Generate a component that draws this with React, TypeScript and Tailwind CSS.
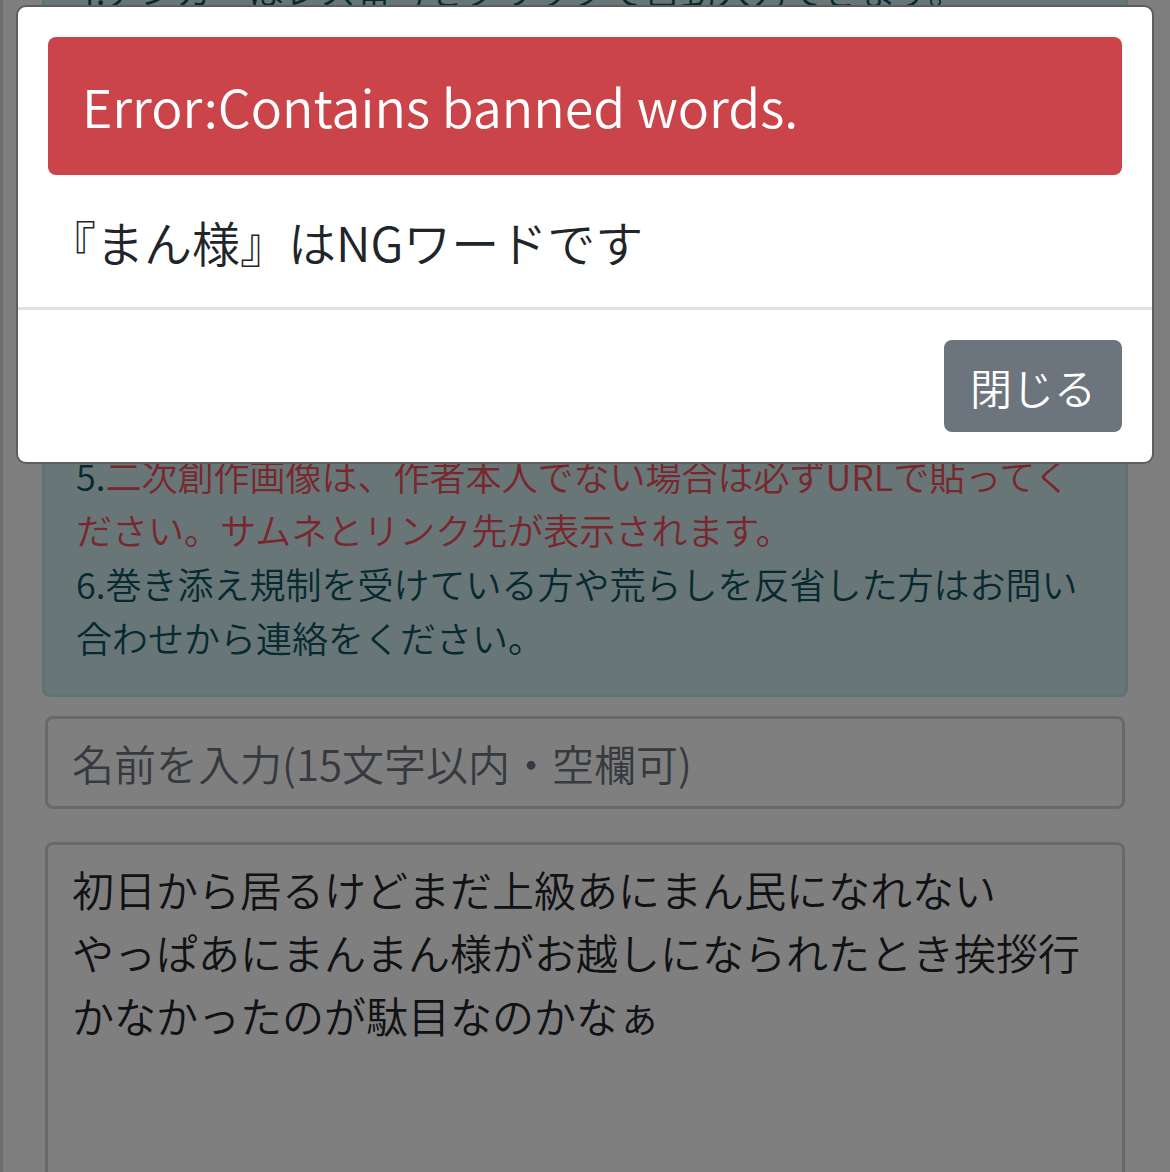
const hiddenRules = [
  "4.アンカーはレス番号をクリックで自動入力できます。",
  "※レス番号を長押しすると返信一覧が表示されます。",
  "※画像はタップで拡大表示できます。",
  "※書き込みには一定の間隔が必要です。",
  "※連続投稿は規制の対象になります。",
  "※NGワードを含む書き込みはできません。",
  "伏せ字による回避も禁止です。",
  "※誹謗中傷や個人情報の書き込みは禁止です。",
  "荒らしには反応せず、通報してください。",
];

function NoticeBox() {
  return (
    <div className="rounded-[8px] border-[3px] border-[#bee5eb] bg-[#d1ecf1] px-[31px] py-[30px] text-[36px] leading-[54px] text-[#0c5460]">
      {hiddenRules.map((line, i) => (
        <div key={i} className="h-[54px] whitespace-nowrap">
          {line}
        </div>
      ))}
      <div className="whitespace-nowrap">
        5.
        <span className="text-[#f0505a]">二次創作画像は、作者本人でない場合は必ずURLで貼ってく</span>
      </div>
      <div className="whitespace-nowrap text-[#f0505a]">ださい。サムネとリンク先が表示されます。</div>
      <div className="whitespace-nowrap">6.巻き添え規制を受けている方や荒らしを反省した方はお問い</div>
      <div className="whitespace-nowrap">合わせから連絡をください。</div>
    </div>
  );
}

function PostForm() {
  return (
    <form className="mx-[3px] mt-[19px] flex flex-col gap-[33px]">
      <input
        type="text"
        placeholder="名前を入力(15文字以内・空欄可)"
        className="h-[93px] w-full rounded-[8px] border-[3px] border-[#ced4da] bg-white px-[24px] text-[42px] leading-[63px] text-[#495057] outline-none placeholder:text-[#6c757d]"
      />
      <textarea
        defaultValue={"初日から居るけどまだ上級あにまん民になれない\nやっぱあにまんまん様がお越しになられたとき挨拶行かなかったのが駄目なのかなぁ"}
        className="h-[420px] w-full resize-none rounded-[8px] border-[3px] border-[#ced4da] bg-white px-[24px] py-[12px] text-[42px] leading-[63px] text-[#212529] outline-none"
      />
    </form>
  );
}

function ErrorModal() {
  return (
    <div className="absolute left-[13px] top-[5px] w-[1138px] overflow-hidden rounded-[10px] border-2 border-[#5e5e5e] bg-white">
      <div className="p-[30px]">
        <div className="rounded-[8px] bg-[#cb444a] px-[34px] py-[30px] text-[52px] leading-[78px] text-white">
          Error:Contains banned words.
        </div>
        <p className="mt-[30px] text-[48px] leading-[72px] text-[#212529]">『まん様』はNGワードです</p>
      </div>
      <div className="flex justify-end border-t-[3px] border-[#dee2e6] p-[30px]">
        <button className="h-[92px] rounded-[8px] bg-[#6c757d] px-[26px] text-[42px] text-white">閉じる</button>
      </div>
    </div>
  );
}

export default function App() {
  return (
    <div className="relative h-[1172px] w-[1170px] overflow-hidden border-l-[3px] border-[#6e6e6e] bg-white font-[350] [font-family:'Noto_Sans_CJK_JP',sans-serif]">
      <main className="-mt-[71px] pl-[39px] pr-[42px]">
        <NoticeBox />
        <PostForm />
      </main>
      <div className="absolute inset-0 bg-black/50" />
      <ErrorModal />
    </div>
  );
}
